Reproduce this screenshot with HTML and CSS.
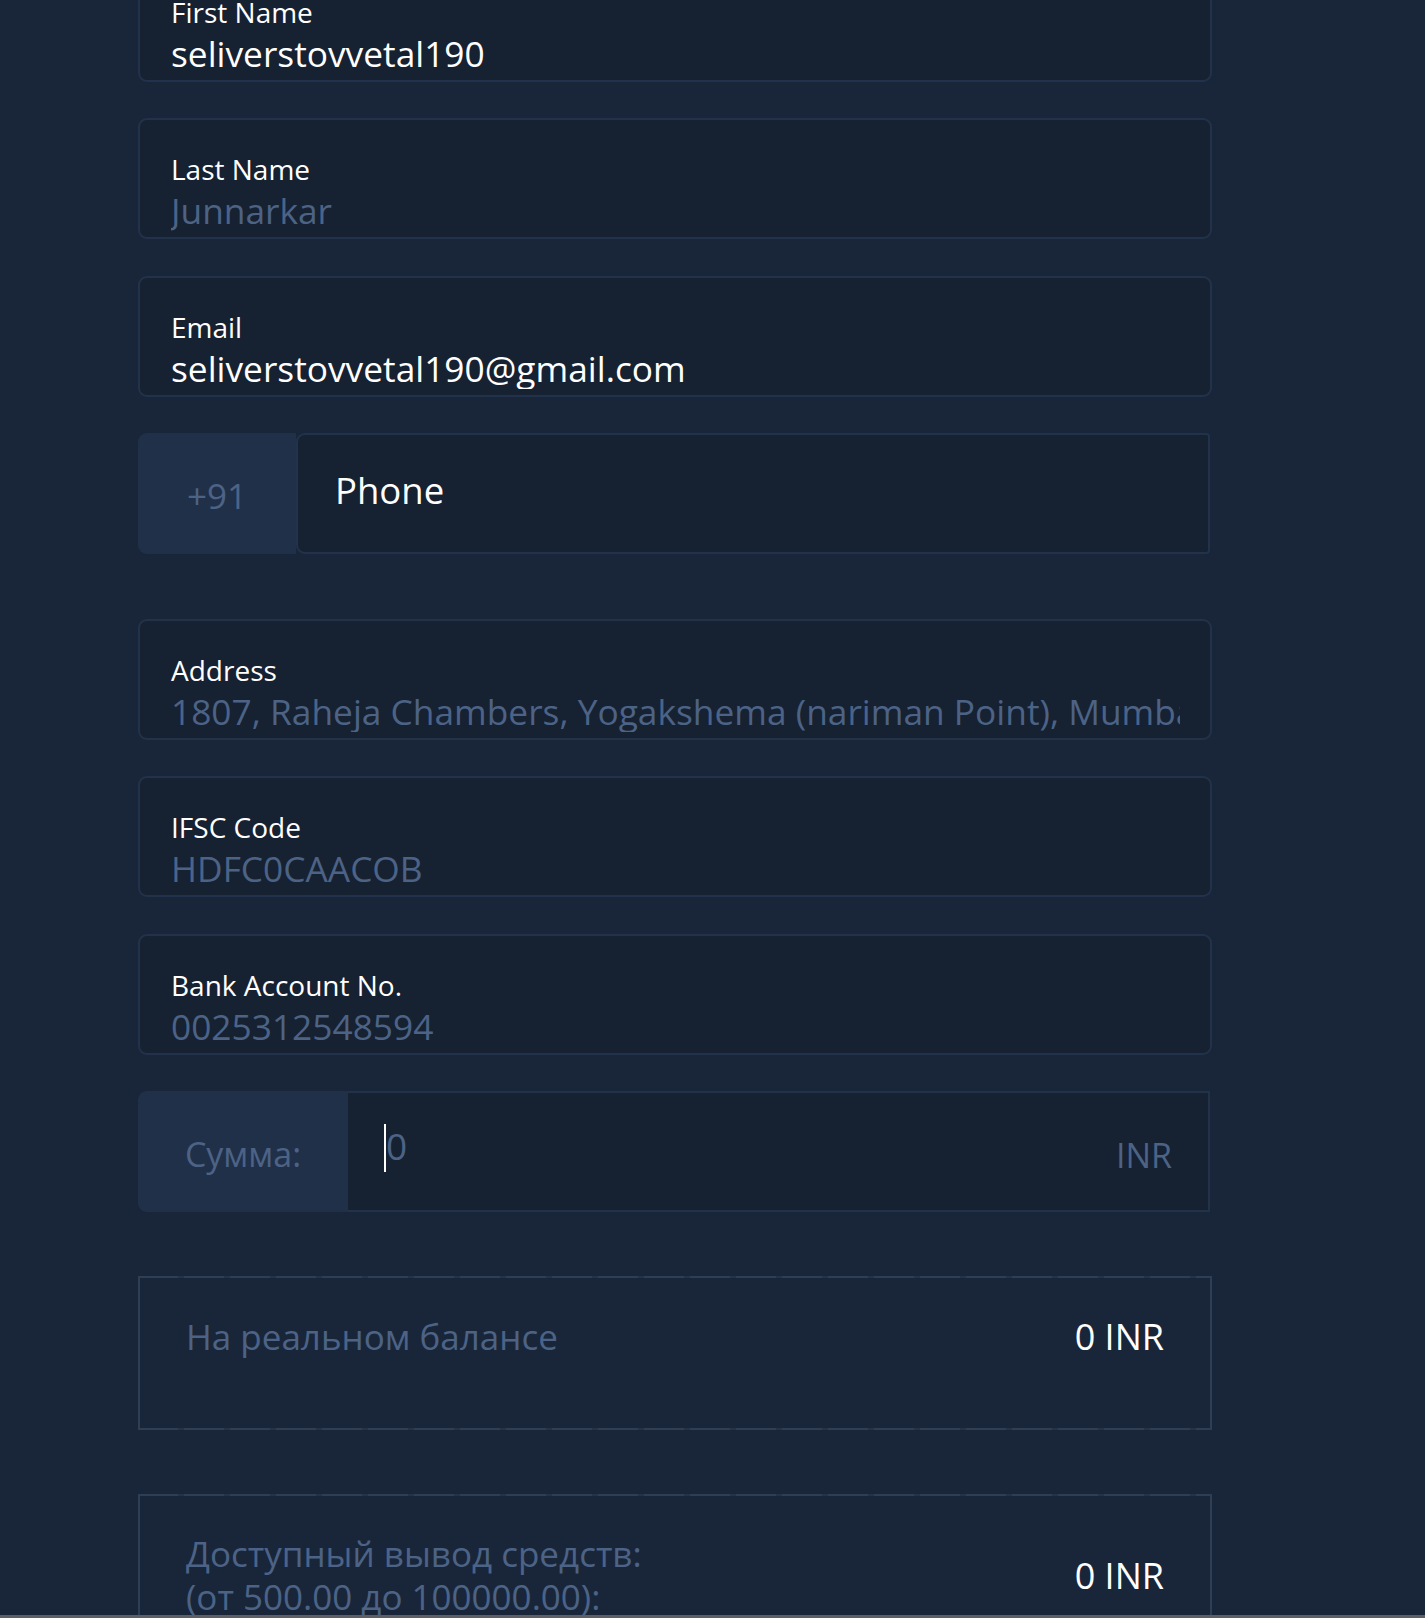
FILE: index.html
```html
<!DOCTYPE html>
<html lang="ru">
<head>
<meta charset="utf-8">
<title>Withdraw</title>
<link rel="stylesheet" href="styles.css">
</head>
<body>
<main class="form">
  <div class="field">
    <div class="label">First Name</div>
    <div class="value">seliverstovvetal190</div>
  </div>
  <div class="field">
    <div class="label">Last Name</div>
    <div class="value muted">Junnarkar</div>
  </div>
  <div class="field">
    <div class="label">Email</div>
    <div class="value">seliverstovvetal190@gmail.com</div>
  </div>
  <div class="group phone-group">
    <div class="prefix prefix-phone">+91</div>
    <div class="group-input phone-input">Phone</div>
  </div>
  <div class="field">
    <div class="label">Address</div>
    <div class="value muted clip">1807, Raheja Chambers, Yogakshema (nariman Point), Mumbai, Maharashtra</div>
  </div>
  <div class="field">
    <div class="label">IFSC Code</div>
    <div class="value muted">HDFC0CAACOB</div>
  </div>
  <div class="field">
    <div class="label">Bank Account No.</div>
    <div class="value muted">0025312548594</div>
  </div>
  <div class="group sum-group">
    <div class="prefix prefix-sum">Сумма:</div>
    <div class="group-input sum-input">
      <span class="amount"><span class="caret"></span>0</span>
      <span class="currency">INR</span>
    </div>
  </div>
  <div class="info info-balance">
    <div class="info-text">На реальном балансе</div>
    <div class="info-value">0 INR</div>
  </div>
  <div class="info info-avail">
    <div class="info-text">Доступный вывод средств:<br>(от 500.00 до 100000.00):</div>
    <div class="info-value">0 INR</div>
  </div>
</main>
<div class="hbar"></div>
</body>
</html>
```
FILE: styles.css
```css
html, body {
  margin: 0;
  padding: 0;
  background: #19263a;
  overflow: hidden;
}
body {
  font-family: "Open Sans", "Noto Sans", sans-serif;
  color: #ffffff;
  height: 1618px;
}
.form {
  width: 1074px;
  margin: -39px 0 0 138px;
  display: flex;
  flex-direction: column;
}
.field {
  box-sizing: border-box;
  height: 121px;
  background: #162132;
  border: 2px solid #22324a;
  border-radius: 9px;
  padding: 32px 30px 0 31px;
  margin-bottom: 36.4px;
  display: flex;
  flex-direction: column;
  gap: 2px;
}
.label {
  font-size: 28px;
  line-height: 35px;
  color: #ffffff;
}
.value {
  font-size: 35.3px;
  line-height: 42px;
  color: #ffffff;
  white-space: nowrap;
  overflow: hidden;
}
.value.muted { color: #4c6386; }
.group {
  display: flex;
  height: 121px;
  box-sizing: border-box;
}
.phone-group { margin-bottom: 64.6px; width: 1072px; }
.sum-group { margin-bottom: 64px; width: 1072px; }
.prefix {
  background: #213049;
  color: #4c6386;
  display: flex;
  justify-content: center;
  border-radius: 9px 0 0 9px;
  box-sizing: border-box;
}
.prefix-phone {
  width: 158px;
  font-size: 35px;
  padding-top: 40px;
  line-height: 46px;
}
.prefix-sum {
  width: 210px;
  font-size: 34px;
  padding-top: 40px;
  line-height: 46px;
}
.group-input {
  flex: 1;
  background: #162132;
  border: 2px solid #22324a;
  box-sizing: border-box;
}
.phone-input {
  border-radius: 9px 4px 4px 9px;
  font-size: 36.5px;
  line-height: 44px;
  padding: 33px 0 0 37px;
  color: #ffffff;
}
.sum-input {
  display: flex;
  justify-content: space-between;
  border-left: none;
  padding: 0 36px 0 38px;
}
.amount {
  position: relative;
  font-size: 37px;
  line-height: 44px;
  margin-top: 31px;
  color: #4c6386;
}
.caret {
  position: absolute;
  left: -2px;
  top: 0;
  width: 2px;
  height: 48px;
  background: #ffffff;
}
.currency {
  font-size: 34px;
  line-height: 44px;
  margin-top: 40px;
  color: #4c6386;
}
.info {
  box-sizing: border-box;
  border: 2px solid #2b3b51;
  border-image: repeating-linear-gradient(90deg, #2e3e54 0 40px, #243348 40px 46px) 2;
  display: flex;
  justify-content: space-between;
  align-items: center;
  padding: 0 46px 0 46px;
}
.info-balance {
  height: 154px;
  align-items: flex-start;
  padding-top: 37px;
  margin-bottom: 64px;
}
.info-avail {
  height: 170px;
  align-items: flex-start;
  padding-top: 36px;
}
.info-text {
  font-size: 35px;
  line-height: 43px;
  color: #4c6386;
}
.info-value {
  font-size: 36px;
  line-height: 43px;
  color: #ffffff;
}
.info-avail .info-value {
  margin-top: 22px;
}
.hbar {
  position: fixed;
  left: 0;
  right: 0;
  bottom: 0;
  height: 3px;
  background: #5c5f63;
}
```
